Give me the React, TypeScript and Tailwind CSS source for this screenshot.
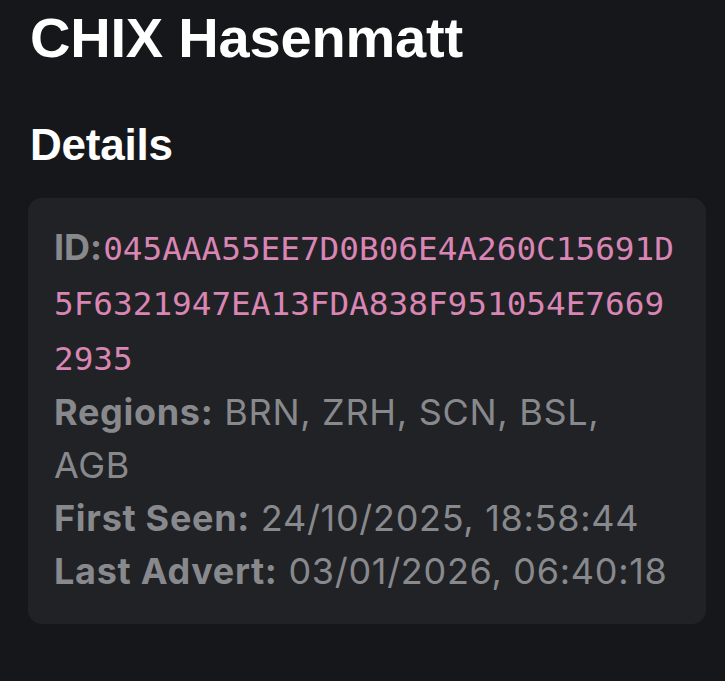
import React from "react";

export default function App() {
  return (
    <div className="min-h-screen w-full bg-[#16171b] px-[28px] pt-[6px] pb-10">
      <h1 className="pl-[2px] font-['Liberation_Sans',Arial,sans-serif] text-[56px] font-bold leading-[64px] tracking-[-0.2px] text-white">
        CHIX Hasenmatt
      </h1>
      <h2 className="mt-[49px] pl-[2px] font-['Liberation_Sans',Arial,sans-serif] text-[44px] font-bold leading-[52px] tracking-[-0.2px] text-white">
        Details
      </h2>
      <div className="mt-[27px] w-[678px] rounded-[14px] bg-[#212226] pl-[26px] pr-[26px] pt-[23px] pb-[26px] font-['Inter','Roboto',sans-serif] text-[36px] leading-[53px] tracking-[0.7px] text-[#88898d]">
        <p className="break-all">
          <span className="font-bold tracking-normal [font-feature-settings:'calt'_0]">ID:</span>
          <span className="ml-[1px] font-['DejaVu_Sans_Mono',monospace] text-[32.7px] tracking-normal text-[#d986b4]">
            045AAA55EE7D0B06E4A260C15691D5F6321947EA13FDA838F951054E76692935
          </span>
        </p>
        <p>
          <span className="font-bold">Regions:</span> BRN, ZRH, SCN, BSL, AGB
        </p>
        <p>
          <span className="font-bold">First Seen:</span> 24/10/2025, 18:58:44
        </p>
        <p>
          <span className="font-bold">Last Advert:</span> 03/01/2026, 06:40:18
        </p>
      </div>
    </div>
  );
}
